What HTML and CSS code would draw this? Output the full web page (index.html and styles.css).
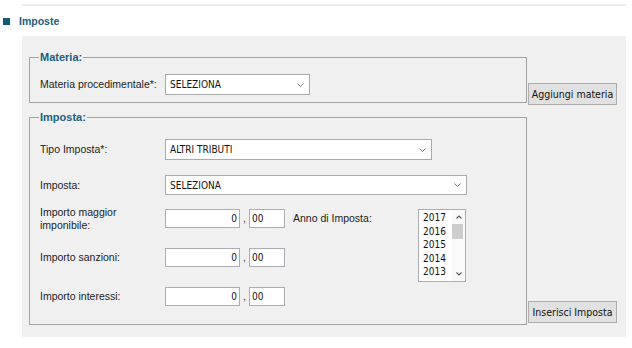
FILE: index.html
```html
<!DOCTYPE html>
<html lang="it">
<head>
<meta charset="utf-8">
<title>Imposte</title>
<link rel="stylesheet" href="styles.css">
</head>
<body>
<div class="topline"></div>
<h2 class="section-title"><span class="square"></span>Imposte</h2>
<div class="panel">
  <fieldset class="box materia">
    <legend>Materia:</legend>
    <div class="row">
      <label class="lbl">Materia procedimentale*:</label>
      <div class="select sel-materia"><span>SELEZIONA</span><svg class="chev" width="7" height="4" viewBox="0 0 7 4"><polyline points="0.5,0.5 3.5,3.5 6.5,0.5" fill="none" stroke="#777" stroke-width="1"/></svg></div>
    </div>
  </fieldset>
  <button class="btn btn-materia" type="button">Aggiungi materia</button>

  <fieldset class="box imposta">
    <legend>Imposta:</legend>
    <div class="row">
      <label class="lbl">Tipo Imposta*:</label>
      <div class="select sel-tipo"><span>ALTRI TRIBUTI</span><svg class="chev" width="7" height="4" viewBox="0 0 7 4"><polyline points="0.5,0.5 3.5,3.5 6.5,0.5" fill="none" stroke="#777" stroke-width="1"/></svg></div>
    </div>
    <div class="row row-imposta">
      <label class="lbl">Imposta:</label>
      <div class="select sel-imposta"><span>SELEZIONA</span><svg class="chev" width="7" height="4" viewBox="0 0 7 4"><polyline points="0.5,0.5 3.5,3.5 6.5,0.5" fill="none" stroke="#777" stroke-width="1"/></svg></div>
    </div>
    <div class="amounts">
      <label class="lbl first">Importo maggior<br>imponibile:</label>
      <input class="field amt" type="text" value="0">
      <span class="comma">,</span>
      <input class="field cents" type="text" value="00">
      <label class="lbl anno">Anno di Imposta:</label>
      <div class="listbox">
        <ul class="options">
          <li>2017</li>
          <li>2016</li>
          <li>2015</li>
          <li>2014</li>
          <li>2013</li>
        </ul>
        <div class="scrollbar">
          <div class="sb-btn"><svg width="6" height="4" viewBox="0 0 6 4"><polyline points="0.5,3.5 3,1 5.5,3.5" fill="none" stroke="#555" stroke-width="1.1"/></svg></div>
          <div class="sb-thumb"></div>
          <div class="sb-track"></div>
          <div class="sb-btn"><svg width="6" height="4" viewBox="0 0 6 4"><polyline points="0.5,0.5 3,3 5.5,0.5" fill="none" stroke="#555" stroke-width="1.1"/></svg></div>
        </div>
      </div>

      <label class="lbl first">Importo sanzioni:</label>
      <input class="field amt" type="text" value="0">
      <span class="comma">,</span>
      <input class="field cents" type="text" value="00">

      <label class="lbl first">Importo interessi:</label>
      <input class="field amt" type="text" value="0">
      <span class="comma">,</span>
      <input class="field cents" type="text" value="00">
    </div>
  </fieldset>
  <button class="btn btn-imposta" type="button">Inserisci Imposta</button>
</div>
</body>
</html>
```
FILE: styles.css
```css
* { box-sizing: border-box; }

body {
  margin: 0;
  width: 632px;
  background: #fff;
  font-family: "Liberation Sans", Arial, sans-serif;
  color: #222;
}

.topline {
  margin: 4px 0 0 22px;
  width: 604px;
  height: 2px;
  background: #ececec;
}

.section-title {
  margin: 9px 0 0 3px;
  height: 13px;
  display: flex;
  align-items: center;
  gap: 9px;
  font-size: 10.5px;
  line-height: 13px;
  font-weight: bold;
  color: #1b5e80;
}

.square {
  width: 7px;
  height: 7px;
  background: #15587a;
}

.panel {
  margin: 8px 0 0 22px;
  width: 604px;
  height: 301px;
  background: #f0f0f0;
  padding: 15px 0 0 7px;
  display: grid;
  grid-template-columns: 498px 89px;
  column-gap: 1px;
  row-gap: 8px;
  align-content: start;
}

.box {
  margin: 0;
  min-width: 0;
  padding: 0 10px;
  border: 1px solid #a3a3a3;
}

.box legend {
  padding: 0 1px;
  margin-left: -1px;
  font-size: 11px;
  line-height: 13px;
  font-weight: bold;
  color: #1b5e80;
}

.materia { padding-top: 10px; padding-bottom: 7px; }
.imposta { padding-top: 15px; padding-bottom: 18px; }

.row {
  display: flex;
  align-items: center;
}

.row-imposta { margin-top: 15px; }

.lbl {
  flex: none;
  width: 125px;
  font-size: 10.5px;
  line-height: 13px;
  color: #222;
}

.select {
  display: flex;
  align-items: center;
  justify-content: space-between;
  background: #fff;
  border: 1px solid #a9a9a9;
  padding: 0 5px 0 4px;
  font-family: "DejaVu Sans Condensed", "DejaVu Sans", sans-serif;
  font-size: 10px;
  color: #111;
}

.sel-materia { width: 145px; height: 21px; }
.sel-tipo { width: 267px; height: 21px; }
.sel-imposta { width: 302px; height: 20px; }

.chev { display: block; }

.amounts {
  margin-top: 14px;
  display: grid;
  grid-template-columns: 125px 75px 9px 36px 8px 125px 48px;
  grid-template-rows: 19px 19px 19px;
  row-gap: 20px;
}

.amounts .lbl { width: auto; align-self: center; }
.amounts .first { grid-column: 1; }
.amounts .anno { grid-column: 6; grid-row: 1; }

.field {
  width: 100%;
  height: 19px;
  margin: 0;
  border: 1px solid #abadb3;
  background: #fff;
  font-family: "DejaVu Sans Condensed", "DejaVu Sans", sans-serif;
  font-size: 10px;
  color: #111;
  padding: 0 2px;
  outline: none;
}

.field.amt { text-align: right; }

.comma {
  align-self: center;
  text-align: center;
  font-size: 10.5px;
  line-height: 13px;
  color: #444;
}

.listbox {
  grid-column: 7;
  grid-row: 1 / span 3;
  align-self: start;
  height: 73px;
  border: 1px solid #abadb3;
  background: #fff;
  display: flex;
}

.options {
  flex: 1;
  list-style: none;
  margin: 0;
  padding: 1px 0 0 4px;
  font-family: "DejaVu Sans Condensed", "DejaVu Sans", sans-serif;
  font-size: 10px;
  line-height: 13.5px;
  color: #111;
}

.scrollbar {
  width: 13px;
  display: flex;
  flex-direction: column;
  background: #fafafa;
}

.sb-btn {
  height: 14px;
  display: flex;
  align-items: center;
  justify-content: center;
}

.sb-btn svg { display: block; }

.sb-thumb {
  height: 15px;
  margin: 0 2px 0 0;
  background: #cdcdcd;
}

.sb-track { flex: 1; }

.btn {
  align-self: end;
  width: 89px;
  height: 22px;
  padding: 0;
  background: #e1e1e1;
  border: 1px solid #adadad;
  font-family: "DejaVu Sans Condensed", "DejaVu Sans", sans-serif;
  font-size: 10.5px;
  color: #111;
}

.btn-materia { margin-bottom: -2px; }
.btn-imposta { margin-bottom: 2px; }
```
